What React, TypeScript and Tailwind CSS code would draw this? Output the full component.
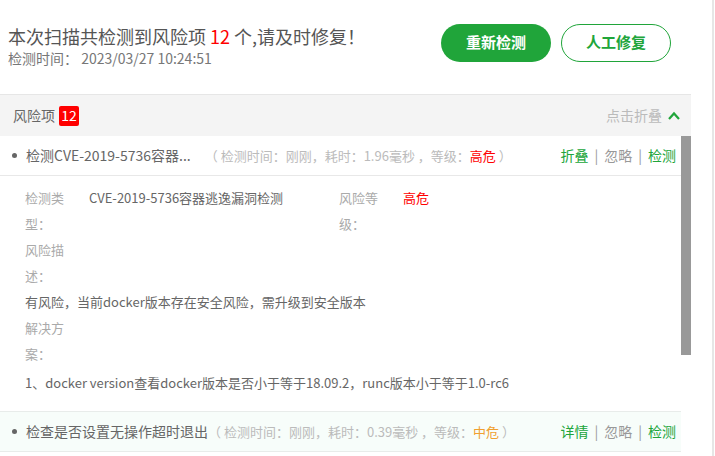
export default function App() {
  const font = { fontFamily: '"Microsoft YaHei", "Noto Sans CJK SC", "Noto Sans", sans-serif' }
  return (
    <div className="flex h-[456px] w-[715px] overflow-hidden bg-white" style={font}>
      <div className="flex w-[691px] flex-col">
        {/* header */}
        <div className="flex h-[94px] items-center justify-between pl-2 pr-[20px]">
          <div className="flex flex-col pb-[2px]">
            <div className="text-[18px] leading-[24px] text-[#555]">
              本次扫描共检测到风险项 <span className="text-[#ff0000]">12</span> 个,请及时修复！
            </div>
            <div className="text-[14px] leading-[20px] text-[#777]">检测时间： 2023/03/27 10:24:51</div>
          </div>
          <div className="flex gap-[10px] pb-[9px]">
            <button className="h-[38px] w-[110px] rounded-full bg-[#20a53a] text-[15px] font-bold text-white">
              重新检测
            </button>
            <button className="h-[38px] w-[110px] rounded-full border border-[#20a53a] bg-white text-[15px] font-bold text-[#20a53a]">
              人工修复
            </button>
          </div>
        </div>

        {/* section header */}
        <div className="flex h-[42px] items-center justify-between border-t border-[#e6e6e6] bg-[#f4f4f4] pl-[13px] pr-[10px]">
          <div className="flex items-center gap-[4px] text-[14px] text-[#666]">
            风险项
            <span className="flex h-[20px] min-w-[20px] items-center justify-center rounded-[2px] bg-[#ff0000] px-[2px] text-[14px] text-white">
              12
            </span>
          </div>
          <div className="flex items-center gap-[5px] text-[14px] text-[#bbb]">
            点击折叠
            <svg width="14" height="14" viewBox="0 0 14 14" fill="none">
              <path d="M2 10 L7 4.5 L12 10" stroke="#20a53a" strokeWidth="2.2" />
            </svg>
          </div>
        </div>

        {/* list */}
        <div className="flex flex-1">
          <div className="flex w-[681px] flex-col">
            <div className="flex h-[40px] items-center justify-between border-b border-[#e8e8e8] pl-[12px] pr-[5px] text-[14px]">
              <div className="flex items-center">
                <span className="mr-[9px] h-[5px] w-[5px] rounded-full bg-[#666]" />
                <span className="text-[#666]">检测CVE-2019-5736容器...</span>
                <span className="ml-[14px] text-[13px] text-[#bbb]">
                  （ 检测时间：刚刚，耗时：1.96毫秒 ，等级：<span className="text-[#ff0000]">高危</span> ）
                </span>
              </div>
              <div className="flex items-center gap-[6px]">
                <span className="text-[#20a53a]">折叠</span>
                <span className="text-[#999]">|</span>
                <span className="text-[#999]">忽略</span>
                <span className="text-[#999]">|</span>
                <span className="text-[#20a53a]">检测</span>
              </div>
            </div>

            <div className="flex h-[235px] flex-col pl-[25px] pt-[9px] text-[13px] leading-[26px]">
              <div className="flex">
                <div className="flex w-[314px]">
                  <div className="w-[45px] text-[#aaa]">检测类型：</div>
                  <div className="ml-[19px] text-[#666]">CVE-2019-5736容器逃逸漏洞检测</div>
                </div>
                <div className="flex">
                  <div className="w-[45px] text-[#aaa]">风险等级：</div>
                  <div className="ml-[19px] text-[#ff0000]">高危</div>
                </div>
              </div>
              <div className="w-[45px] text-[#aaa]">风险描述：</div>
              <div className="text-[#666]">有风险，当前docker版本存在安全风险，需升级到安全版本</div>
              <div className="w-[45px] text-[#aaa]">解决方案：</div>
              <div className="mt-[3px] text-[#666]">1、docker version查看docker版本是否小于等于18.09.2，runc版本小于等于1.0-rc6</div>
            </div>

            <div className="flex h-[41px] items-center justify-between border-y border-[#e8ecea] bg-[#f7fdfa] pl-[12px] pr-[5px] text-[14px]">
              <div className="flex items-center">
                <span className="mr-[9px] h-[5px] w-[5px] rounded-full bg-[#666]" />
                <span className="text-[#666]">检查是否设置无操作超时退出</span>
                <span className="text-[13px] text-[#bbb]">
                  （ 检测时间：刚刚，耗时：0.39毫秒 ，等级：<span className="text-[#f0a030]">中危</span> ）
                </span>
              </div>
              <div className="flex items-center gap-[6px]">
                <span className="text-[#20a53a]">详情</span>
                <span className="text-[#999]">|</span>
                <span className="text-[#999]">忽略</span>
                <span className="text-[#999]">|</span>
                <span className="text-[#20a53a]">检测</span>
              </div>
            </div>
          </div>
          <div className="w-[10px]">
            <div className="h-[219px] bg-[#999]" />
          </div>
        </div>
      </div>
      <div className="ml-[21px] w-[2px] bg-[#e6e6e6]" />
    </div>
  )
}
